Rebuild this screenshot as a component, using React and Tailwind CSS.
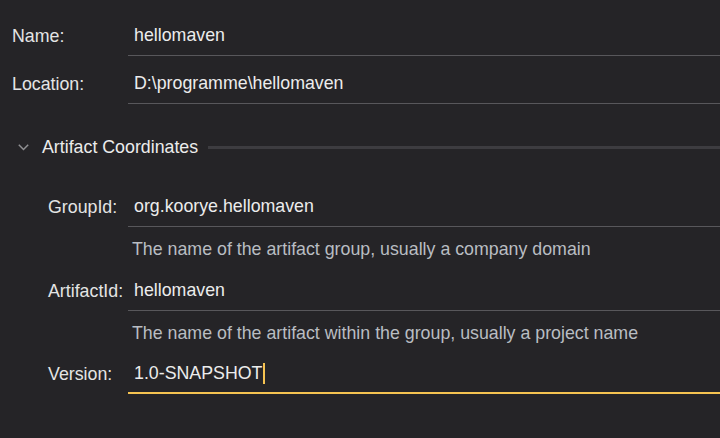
import React from 'react';

const Field = ({ label, value, indent, focused }) => (
  <div className="flex">
    <div className={`w-[128px] shrink-0 flex items-center text-[17.8px] text-[#e4e4e4] ${indent ? 'pl-[48px]' : 'pl-[12px]'}`}>
      {label}
    </div>
    <div
      className={`flex-1 flex items-center pl-[6px] text-[17.8px] text-[#ececec] ${
        focused ? 'h-[39px] border-b-2 border-[#f5c351]' : 'h-[40px] border-b border-[#58575b]'
      }`}
    >
      {value}
      {focused && <span className="inline-block w-[2px] h-[21px] bg-[#f5c351] ml-[1px]" />}
    </div>
  </div>
);

const Hint = ({ children }) => (
  <div className="h-[44px] flex items-center pl-[132px] text-[17.8px] text-[#b9bdc2]">
    {children}
  </div>
);

export default function App() {
  return (
    <div
      className="w-[720px] h-[438px] overflow-hidden bg-[#252427] pt-[16px]"
      style={{ fontFamily: '"Liberation Sans", Arial, sans-serif' }}
    >
      <Field label="Name:" value="hellomaven" />
      <div className="h-[8px]" />
      <Field label="Location:" value="D:\programme\hellomaven" />

      {/* section header */}
      <div className="flex items-center h-[20px] mt-[33px]">
        <svg className="ml-[18px] w-[11px] h-[7px]" viewBox="0 0 11 7" fill="none">
          <path d="M0.8 0.8 L5.5 5.5 L10.2 0.8" stroke="#909093" strokeWidth="1.5" />
        </svg>
        <span className="ml-[13px] text-[17.8px] text-[#ececec]">Artifact Coordinates</span>
        <div className="flex-1 h-[3px] bg-[#3d3c40] ml-[10px]" />
      </div>

      <div className="h-[30px]" />
      <Field indent label="GroupId:" value="org.koorye.hellomaven" />
      <Hint>The name of the artifact group, usually a company domain</Hint>
      <Field indent label="ArtifactId:" value="hellomaven" />
      <Hint>The name of the artifact within the group, usually a project name</Hint>
      <Field indent focused label="Version:" value="1.0-SNAPSHOT" />
    </div>
  );
}
